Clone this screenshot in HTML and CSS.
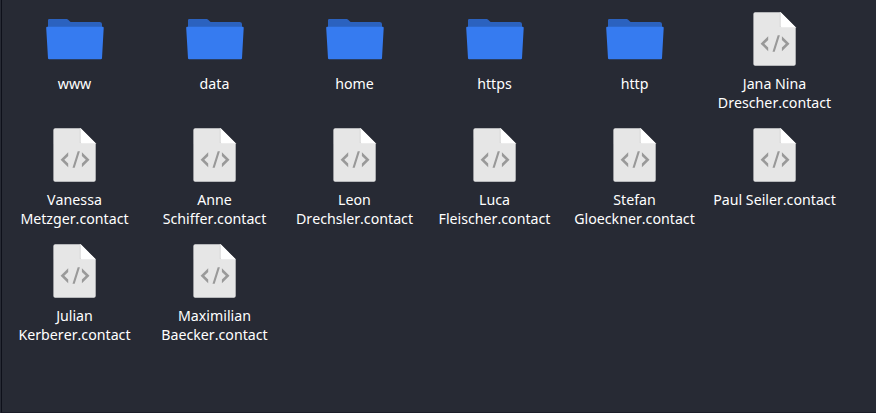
FILE: index.html
```
<!DOCTYPE html>
<html lang="en"><head><meta charset="utf-8"><title>Files</title><link rel="stylesheet" href="styles.css"></head>
<body>
<svg class="defs" aria-hidden="true"><defs>
<symbol id="folder" viewBox="0 0 58 55"><path fill="#2b62bf" d="M2 8.200Q2 7 3.200 7H20.500Q21.500 7 22.200 7.700L24 9.500Q24.600 10 25.500 10H53.500Q56 10 56 12V20H2Z"/><path fill="#367bf0" d="M1.200 14.700H56.700Q57.800 14.700 57.700 16L56 46.200Q56 47.300 54.800 47.300H3.200Q2 47.300 2 46.200L.2 16Q.1 14.700 1.200 14.700Z"/></symbol>
<symbol id="contact" viewBox="0 0 58 55"><path fill="#e6e6e6" d="M9.200.3H34.700L49.700 15.300V51.900Q49.700 53.700 47.900 53.700H9.200Q7.400 53.700 7.400 51.900V2.100Q7.400.3 9.200.3Z"/><path fill="#d6d6d6" d="M33.700.3H35V15H33.700Z"/><path fill="#fff" d="M34.700.3L49.700 15.300H36Q34.700 15.300 34.700 14Z"/><path fill="#999" d="M22.200 24.200V28L18.300 31.700L22.200 35.500V39.300L14.600 31.700ZM35.900 24.200V28L39.800 31.700L35.900 35.500V39.300L43.500 31.700ZM31.700 23.300H33.900L28.700 39.700H26.500Z"/></symbol>
</defs></svg>
<main class="files" id="files"></main><script src="files.js"></script></body></html>
```

FILE: styles.css
```
body{margin:0;background:#272a34;font-family:"Noto Sans",sans-serif}
.defs{display:none}
.files{box-sizing:border-box;height:413px;margin-left:1px;border-left:1px solid #0e101a;border-bottom:1px solid #1b1d28;display:grid;grid-template-columns:repeat(6,140px);grid-auto-rows:116px;padding:12px 0 0 3px;overflow:hidden}
.item{display:flex;flex-direction:column;align-items:center;color:#fff}
.icon{flex:none;width:58px;height:55px}
.name{margin-top:7px;padding-right:1px;font-size:14.200px;line-height:19px;text-align:center;white-space:pre;font-kerning:none}
```

FILE: files.js
```
const entries = ["www","data","home","https","http","Jana Nina\nDrescher.contact","Vanessa\nMetzger.contact","Anne\nSchiffer.contact","Leon\nDrechsler.contact","Luca\nFleischer.contact","Stefan\nGloeckner.contact","Paul Seiler.contact","Julian\nKerberer.contact","Maximilian\nBaecker.contact"];
document.getElementById("files").innerHTML = entries.map((name, i) => `<div class="item"><svg class="icon"><use href="#${i < 5 ? "folder" : "contact"}"/></svg><div class="name">${name}</div></div>`).join("");
```
